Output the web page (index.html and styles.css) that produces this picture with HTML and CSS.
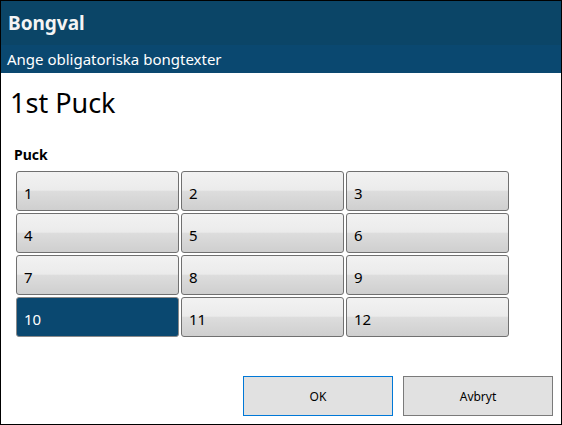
FILE: index.html
```html
<!DOCTYPE html>
<html>
<head>
    <meta charset="UTF-8">
    <title>Bongval</title>
    <link rel="stylesheet" href="styles.css">
</head>
<body>
    <div class="window">
        <div class="titlebar">Bongval</div>
        <div class="subtitle">Ange obligatoriska bongtexter</div>
        <div class="content">
            <h1>1st Puck</h1>
            <div class="group-label">Puck</div>
            <div class="choices">
                <button class="choice">1</button>
                <button class="choice">2</button>
                <button class="choice">3</button>
                <button class="choice">4</button>
                <button class="choice">5</button>
                <button class="choice">6</button>
                <button class="choice">7</button>
                <button class="choice">8</button>
                <button class="choice">9</button>
                <button class="choice selected">10</button>
                <button class="choice">11</button>
                <button class="choice">12</button>
            </div>
        </div>
        <div class="footer">
            <button class="dialog-button default">OK</button>
            <button class="dialog-button">Avbryt</button>
        </div>
    </div>
</body>
</html>
```

FILE: styles.css
```css
* {
    box-sizing: border-box;
}

body {
    margin: 0;
    font-family: "Noto Sans", "Open Sans", sans-serif;
    background-color: #ffffff;
}

.window {
    width: 562px;
    height: 425px;
    border: 1px solid #000000;
    display: flex;
    flex-direction: column;
    background-color: #ffffff;
}

.titlebar {
    height: 44px;
    padding-left: 7px;
    background-color: #0b4567;
    color: #f4f4f4;
    font-size: 19px;
    font-weight: bold;
    line-height: 44px;
}

.subtitle {
    height: 28px;
    padding-left: 6px;
    background-color: #0a4870;
    color: #ffffff;
    font-size: 15px;
    line-height: 28px;
}

.content {
    padding: 0 0 0 15px;
}

h1 {
    margin: 12px 0 0 -6px;
    font-size: 27px;
    font-weight: normal;
    line-height: 36px;
    color: #000000;
}

.group-label {
    margin: 24px 0 0 -2px;
    font-size: 14px;
    font-weight: bold;
    line-height: 20px;
    color: #000000;
}

.choices {
    margin-top: 6px;
    display: grid;
    grid-template-columns: repeat(3, 163px);
    grid-auto-rows: 40px;
    column-gap: 2px;
    row-gap: 2px;
}

.choice {
    padding: 3px 0 0 7px;
    text-align: left;
    font-family: inherit;
    font-size: 15px;
    color: #000000;
    border: 1px solid #707070;
    border-radius: 3px;
    background: linear-gradient(to bottom, #f2f2f2 0%, #ebebeb 48%, #dddddd 50%, #cfcfcf 100%);
}

.choice.selected {
    background: #0a4870;
    color: #ffffff;
    border-color: #8a8a8a;
}

.footer {
    margin-top: auto;
    display: flex;
    justify-content: flex-end;
    gap: 10px;
    padding: 0 8px 8px 0;
}

.dialog-button {
    width: 150px;
    height: 40px;
    font-family: inherit;
    font-size: 12px;
    color: #000000;
    background-color: #e1e1e1;
    border: 1px solid #7a7a7a;
}

.dialog-button.default {
    border-color: #0078d7;
}
```
